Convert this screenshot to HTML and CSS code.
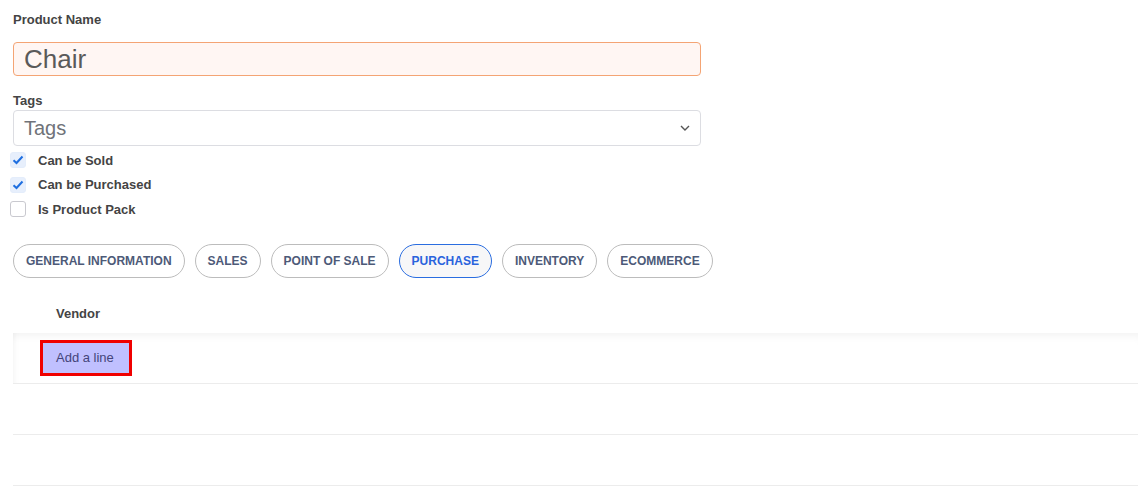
FILE: index.html
```html
<!DOCTYPE html>
<html lang="en">
<head>
    <meta charset="UTF-8">
    <title>Product - Chair</title>
    <link rel="stylesheet" href="styles.css">
</head>
<body>
    <div class="sheet">
        <label class="field-label">Product Name</label>
        <div class="name-input">Chair</div>

        <label class="field-label tags-label">Tags</label>
        <div class="tags-select">
            <span class="placeholder">Tags</span>
            <svg class="chevron" width="10" height="6" viewBox="0 0 10 6"><path d="M1 1 L5 5 L9 1" fill="none" stroke="#555" stroke-width="1.4"/></svg>
        </div>

        <div class="checks">
            <div class="check-row">
                <span class="box checked"><svg width="12" height="10" viewBox="0 0 12 10"><path d="M1.5 5.2 L4.5 8 L10.5 1.5" fill="none" stroke="#1f6fe0" stroke-width="2"/></svg></span>
                <span class="check-label">Can be Sold</span>
            </div>
            <div class="check-row">
                <span class="box checked"><svg width="12" height="10" viewBox="0 0 12 10"><path d="M1.5 5.2 L4.5 8 L10.5 1.5" fill="none" stroke="#1f6fe0" stroke-width="2"/></svg></span>
                <span class="check-label">Can be Purchased</span>
            </div>
            <div class="check-row">
                <span class="box"></span>
                <span class="check-label">Is Product Pack</span>
            </div>
        </div>

        <div class="tabs">
            <div class="tab">General Information</div>
            <div class="tab">Sales</div>
            <div class="tab">Point of Sale</div>
            <div class="tab active">Purchase</div>
            <div class="tab">Inventory</div>
            <div class="tab">eCommerce</div>
        </div>

        <div class="list">
            <div class="list-head">Vendor</div>
            <div class="list-row first">
                <button class="add-line">Add a line</button>
            </div>
            <div class="list-row"></div>
            <div class="list-row"></div>
        </div>
    </div>
</body>
</html>
```

FILE: styles.css
```css
body {
    margin: 0;
    font-family: "Liberation Sans", Arial, sans-serif;
    color: #444;
    background: #fff;
}
.sheet {
    padding: 12px 0 0 13px;
}
.field-label {
    display: block;
    font-size: 13px;
    font-weight: bold;
    color: #444;
    line-height: 16px;
}
.name-input {
    margin-top: 14px;
    height: 32px;
    border: 1px solid #f4a474;
    border-radius: 4px;
    background: #fff6f3;
    font-size: 26px;
    line-height: 32px;
    color: #5a5a5a;
    padding-left: 10px;
    width: 676px;
}
.tags-label {
    margin-top: 17px;
}
.tags-select {
    margin-top: 1px;
    width: 676px;
    height: 34px;
    border: 1px solid #dcdde2;
    border-radius: 4px;
    padding: 0 0 0 10px;
    display: flex;
    align-items: center;
    justify-content: space-between;
}
.placeholder {
    font-size: 20px;
    color: #707379;
}
.chevron {
    margin-right: 10px;
}
.checks {
    margin-top: 2px;
    margin-left: -3px;
}
.check-row {
    display: flex;
    align-items: center;
    height: 24.5px;
}
.box {
    width: 14px;
    height: 14px;
    border: 1px solid #c9c9cf;
    border-radius: 3px;
    display: flex;
    align-items: center;
    justify-content: center;
    margin-right: 12px;
}
.box.checked {
    border-color: #e4edfb;
    background: #e7effc;
}
.check-label {
    font-size: 13px;
    font-weight: bold;
    color: #444;
}
.tabs {
    display: flex;
    gap: 10px;
    margin-top: 22px;
}
.tab {
    height: 32px;
    line-height: 32px;
    padding: 0 12px;
    border: 1px solid #bcbcbc;
    border-radius: 17px;
    font-size: 12px;
    font-weight: bold;
    text-transform: uppercase;
    color: #4d5a78;
}
.tab.active {
    border-color: #2a6de0;
    color: #2a63dd;
    background: #f7f7f8;
}
.list {
    margin-top: 17px;
}
.list-head {
    height: 38px;
    line-height: 38px;
    padding-left: 43px;
    font-size: 13px;
    font-weight: bold;
    color: #444;
}
.list-row {
    height: 50px;
    border-bottom: 1px solid #ececec;
    display: flex;
    align-items: center;
}
.list-row.first {
    box-shadow: inset 0 9px 8px -6px rgba(0, 0, 0, 0.05), inset 7px 0 6px -6px rgba(0, 0, 0, 0.05);
}
.add-line {
    margin-left: 27px;
    height: 36px;
    padding: 0 15px 0 13px;
    border: 3px solid #f00000;
    background: #c0c0ff;
    font-family: "Liberation Sans", Arial, sans-serif;
    font-size: 13px;
    color: #44447a;
    cursor: pointer;
}
```
